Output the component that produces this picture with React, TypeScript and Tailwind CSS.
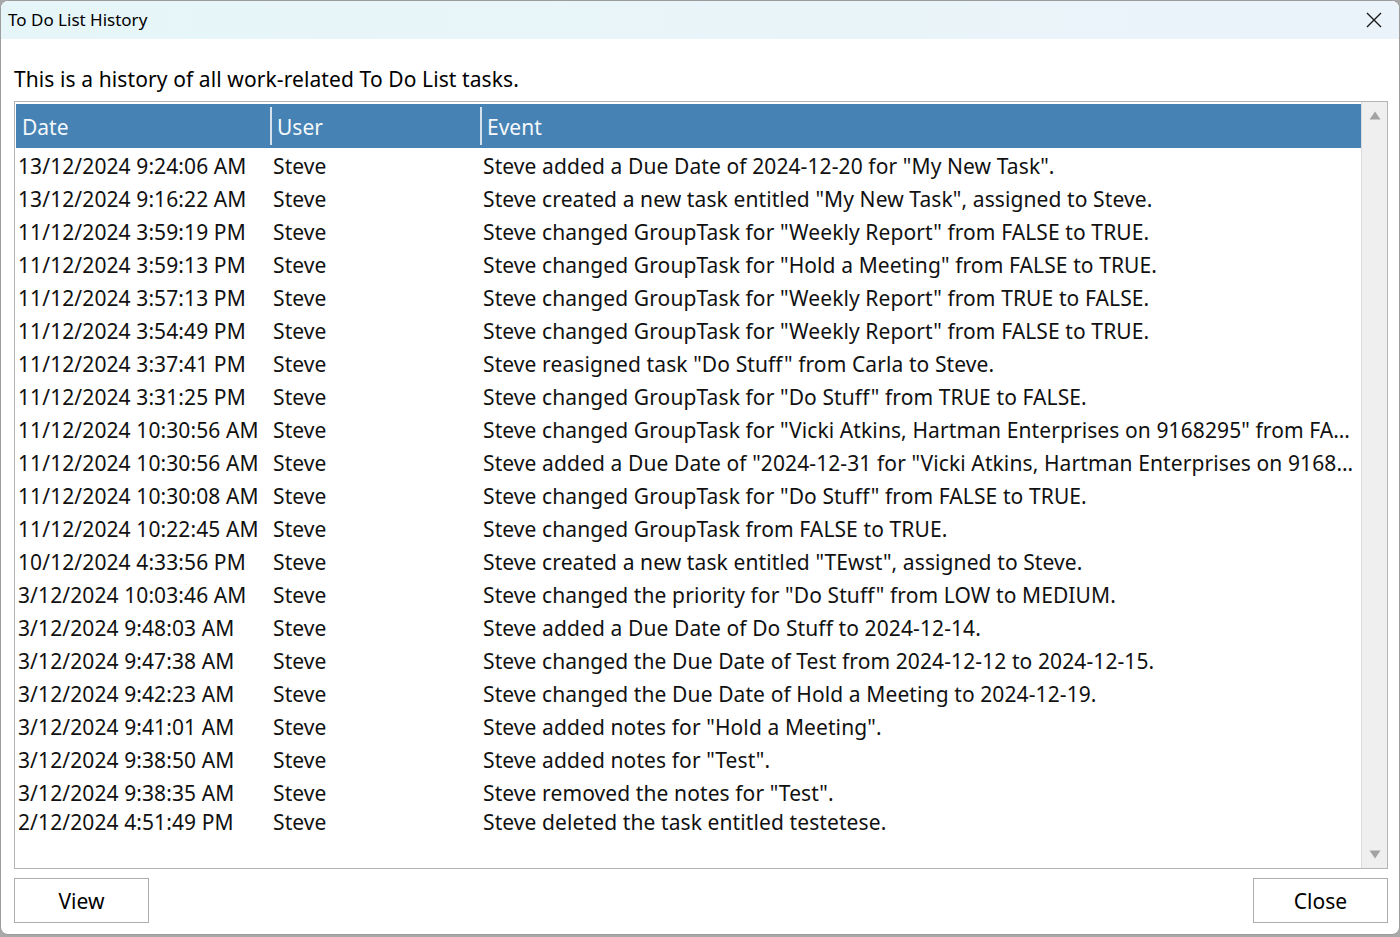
import React from "react";

const rows: [string, string, string][] = [
  ["13/12/2024 9:24:06 AM", "Steve", 'Steve added a Due Date of 2024-12-20 for "My New Task".'],
  ["13/12/2024 9:16:22 AM", "Steve", 'Steve created a new task entitled "My New Task", assigned to Steve.'],
  ["11/12/2024 3:59:19 PM", "Steve", 'Steve changed GroupTask for "Weekly Report" from FALSE to TRUE.'],
  ["11/12/2024 3:59:13 PM", "Steve", 'Steve changed GroupTask for "Hold a Meeting" from FALSE to TRUE.'],
  ["11/12/2024 3:57:13 PM", "Steve", 'Steve changed GroupTask for "Weekly Report" from TRUE to FALSE.'],
  ["11/12/2024 3:54:49 PM", "Steve", 'Steve changed GroupTask for "Weekly Report" from FALSE to TRUE.'],
  ["11/12/2024 3:37:41 PM", "Steve", 'Steve reasigned task "Do Stuff" from Carla to Steve.'],
  ["11/12/2024 3:31:25 PM", "Steve", 'Steve changed GroupTask for "Do Stuff" from TRUE to FALSE.'],
  ["11/12/2024 10:30:56 AM", "Steve", 'Steve changed GroupTask for "Vicki Atkins, Hartman Enterprises on 9168295" from FALSE to TRUE.'],
  ["11/12/2024 10:30:56 AM", "Steve", 'Steve added a Due Date of "2024-12-31 for "Vicki Atkins, Hartman Enterprises on 9168295".'],
  ["11/12/2024 10:30:08 AM", "Steve", 'Steve changed GroupTask for "Do Stuff" from FALSE to TRUE.'],
  ["11/12/2024 10:22:45 AM", "Steve", "Steve changed GroupTask from FALSE to TRUE."],
  ["10/12/2024 4:33:56 PM", "Steve", 'Steve created a new task entitled "TEwst", assigned to Steve.'],
  ["3/12/2024 10:03:46 AM", "Steve", 'Steve changed the priority for "Do Stuff" from LOW to MEDIUM.'],
  ["3/12/2024 9:48:03 AM", "Steve", "Steve added a Due Date of Do Stuff to 2024-12-14."],
  ["3/12/2024 9:47:38 AM", "Steve", "Steve changed the Due Date of Test from 2024-12-12 to 2024-12-15."],
  ["3/12/2024 9:42:23 AM", "Steve", "Steve changed the Due Date of Hold a Meeting to 2024-12-19."],
  ["3/12/2024 9:41:01 AM", "Steve", 'Steve added notes for "Hold a Meeting".'],
  ["3/12/2024 9:38:50 AM", "Steve", 'Steve added notes for "Test".'],
  ["3/12/2024 9:38:35 AM", "Steve", 'Steve removed the notes for "Test".'],
  ["2/12/2024 4:51:49 PM", "Steve", "Steve deleted the task entitled testetese."],
];

export default function App() {
  const font = { fontFamily: '"Noto Sans", "Open Sans", Arial, sans-serif' };
  return (
    <div className="w-[1400px] h-[937px] bg-[#a8a8a8] overflow-hidden" style={font}>
      <div className="w-[1400px] h-[935px] rounded-[8px] border border-[#9c9c9c] bg-white overflow-hidden flex flex-col">
        {/* Title bar */}
        <div className="h-[38px] shrink-0 flex items-center justify-between bg-gradient-to-r from-[#e6f6f8] to-[#ebf3fa] pl-[7px] pr-[16px]">
          <span className="text-[17px] text-black">To Do List History</span>
          <svg width="18" height="18" viewBox="0 0 18 18">
            <path d="M2 2 L16 16 M16 2 L2 16" stroke="#1a1a1a" strokeWidth="1.4" />
          </svg>
        </div>
        {/* Body */}
        <div className="flex-1 flex flex-col pl-[13px] pr-[11px]">
          <div className="h-[62px] flex items-end pb-[11px] text-[21px] text-black tracking-[0.1px] leading-none">
            This is a history of all work-related To Do List tasks.
          </div>
          <div className="w-[1374px] h-[768px] border border-[#b4b4b4] flex bg-white">
            <div className="flex-1 flex flex-col pt-[2px] pl-[1px] overflow-hidden">
              <div className="h-[44px] shrink-0 bg-[#4682b4] flex items-center text-[21px] text-[#f4f8fb]">
                <div className="w-[254px] pl-[6px] pt-[3px] h-full flex items-center">Date</div>
                <div className="w-[2px] h-[38px] bg-[#d5e2ee]" />
                <div className="w-[208px] pl-[5px] pt-[3px] h-full flex items-center">User</div>
                <div className="w-[2px] h-[38px] bg-[#d5e2ee]" />
                <div className="flex-1 pl-[5px] pt-[3px] h-full flex items-center">Event</div>
              </div>
              <div className="pt-[2px]">
                {rows.map((r, i) => (
                  <div
                    key={i}
                    className={`flex items-center text-[21px] text-[#111] tracking-[0.1px] whitespace-nowrap ${
                      i === rows.length - 1 ? "h-[25px]" : "h-[33px]"
                    }`}
                  >
                    <div className="w-[256px] pl-[2px] shrink-0">{r[0]}</div>
                    <div className="w-[210px] pl-[1px] shrink-0">{r[1]}</div>
                    <div className="w-[877px] pl-[1px] pr-[2px] truncate">{r[2]}</div>
                  </div>
                ))}
              </div>
            </div>
            <div className="w-[26px] shrink-0 bg-[#efefef] border-l border-[#dcdcdc] flex flex-col items-center justify-between py-[9px]">
              <svg width="12" height="9" viewBox="0 0 12 9">
                <path d="M6 0.5 L11.5 8.5 L0.5 8.5 Z" fill="#a3a3a3" />
              </svg>
              <svg width="12" height="9" viewBox="0 0 12 9">
                <path d="M0.5 0.5 L11.5 0.5 L6 8.5 Z" fill="#a3a3a3" />
              </svg>
            </div>
          </div>
          <div className="flex justify-between mt-[9px]">
            <button className="w-[135px] h-[45px] pt-[2px] border border-[#adadad] bg-white text-[21px] text-black">
              View
            </button>
            <button className="w-[135px] h-[45px] pt-[2px] border border-[#adadad] bg-white text-[21px] text-black">
              Close
            </button>
          </div>
        </div>
      </div>
    </div>
  );
}
